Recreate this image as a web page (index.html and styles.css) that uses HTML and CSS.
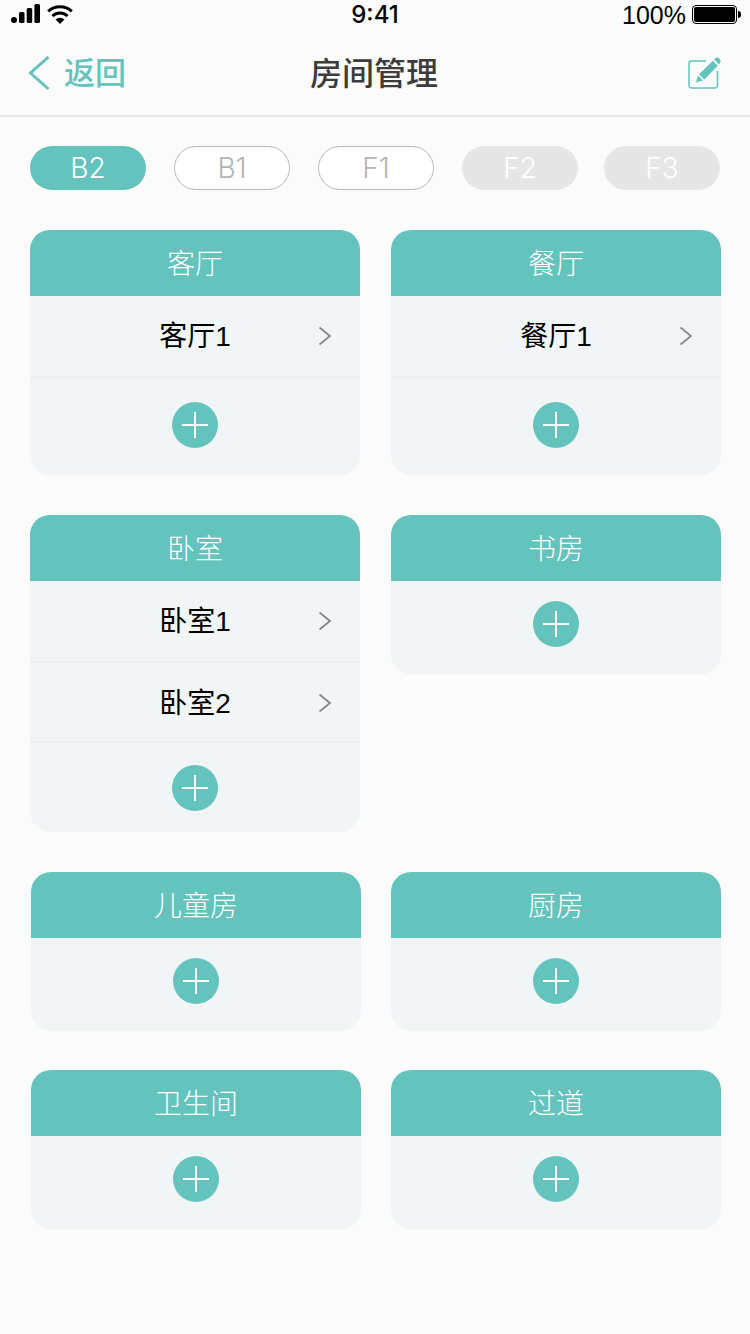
FILE: index.html
```html
<!DOCTYPE html>
<html lang="zh">
<head>
    <meta charset="UTF-8">
    <title>房间管理</title>
    <link rel="stylesheet" href="styles.css">
</head>
<body>
    <div class="status-bar">
        <div class="status-left">
            <svg class="signal" width="30" height="19" viewBox="0 0 30 19">
                <circle cx="3" cy="16" r="3" fill="#000"/>
                <rect x="8" y="8" width="5.500" height="11" rx="1.500" fill="#000"/>
                <rect x="15.700" y="4" width="5.500" height="15" rx="1.500" fill="#000"/>
                <rect x="23.400" y="0" width="5.600" height="19" rx="1.500" fill="#000"/>
            </svg>
            <svg class="wifi" width="26" height="19" viewBox="0 0 26 19">
                <path d="M13 19 L8.600 14.400 A6.400 6.400 0 0 1 17.400 14.400 Z" fill="#000"/>
                <path d="M5.400 11 A11 11 0 0 1 20.600 11" fill="none" stroke="#000" stroke-width="3"/>
                <path d="M1.200 6.400 A17.500 17.500 0 0 1 24.800 6.400" fill="none" stroke="#000" stroke-width="3"/>
            </svg>
        </div>
        <div class="status-time">9:41</div>
        <div class="status-right">
            <span class="battery-text">100%</span>
            <span class="battery"><span class="battery-fill"></span></span>
            <span class="battery-tip"></span>
        </div>
    </div>

    <header class="nav">
        <a class="back">
            <svg width="24" height="36" viewBox="0 0 24 36">
                <path d="M20.500 1 L2.500 17 L20.500 33" fill="none" stroke="#64c3bd" stroke-width="3"/>
            </svg>
            <span>返回</span>
        </a>
        <h1>房间管理</h1>
        <svg class="edit" width="34" height="34" viewBox="0 0 34 34">
            <path d="M18 4 H3.500 A2.500 2.500 0 0 0 1 6.500 V28.500 A2.500 2.500 0 0 0 3.500 31 H27 A2.500 2.500 0 0 0 29.500 28.500 V14" fill="none" stroke="#64c3bd" stroke-width="1.500"/>
            <path d="M10 18.600 L15 23.600 L8 25.500 Z" fill="#64c3bd"/>
            <path d="M11 17.400 L16.400 22.400 L29.800 8.800 L24.800 3.800 Z" fill="#64c3bd"/>
            <path d="M26 2.600 L27.500 1.200 A2.400 2.400 0 0 1 31 1.200 L32 2.400 A2.400 2.400 0 0 1 32 5.600 L31 7.600 Z" fill="#64c3bd"/>
        </svg>
    </header>

    <div class="floors">
        <div class="floor active">B2</div>
        <div class="floor outline">B1</div>
        <div class="floor outline">F1</div>
        <div class="floor off">F2</div>
        <div class="floor off last">F3</div>
    </div>

    <main class="rooms">
        <div class="room-row row-one">
            <section class="card">
                <div class="card-head">客厅</div>
                <div class="item item-first">客厅1<svg class="arrow" width="14" height="20" viewBox="0 0 14 20"><path d="M1.500 1.500 L12 10 L1.500 18.500" fill="none" stroke="#86868e" stroke-width="1.800"/></svg></div>
                <div class="add add-first"><span class="plus"></span></div>
            </section>
            <section class="card">
                <div class="card-head">餐厅</div>
                <div class="item item-first">餐厅1<svg class="arrow" width="14" height="20" viewBox="0 0 14 20"><path d="M1.500 1.500 L12 10 L1.500 18.500" fill="none" stroke="#86868e" stroke-width="1.800"/></svg></div>
                <div class="add add-first"><span class="plus"></span></div>
            </section>
        </div>

        <div class="room-row row-two">
            <section class="card">
                <div class="card-head">卧室</div>
                <div class="item item-first">卧室1<svg class="arrow" width="14" height="20" viewBox="0 0 14 20"><path d="M1.500 1.500 L12 10 L1.500 18.500" fill="none" stroke="#86868e" stroke-width="1.800"/></svg></div>
                <div class="item">卧室2<svg class="arrow" width="14" height="20" viewBox="0 0 14 20"><path d="M1.500 1.500 L12 10 L1.500 18.500" fill="none" stroke="#86868e" stroke-width="1.800"/></svg></div>
                <div class="add add-second"><span class="plus"></span></div>
            </section>
            <section class="card">
                <div class="card-head">书房</div>
                <div class="add"><span class="plus"></span></div>
            </section>
        </div>

        <div class="room-row row-three shifted">
            <section class="card">
                <div class="card-head">儿童房</div>
                <div class="add"><span class="plus"></span></div>
            </section>
            <section class="card">
                <div class="card-head">厨房</div>
                <div class="add"><span class="plus"></span></div>
            </section>
        </div>

        <div class="room-row shifted">
            <section class="card">
                <div class="card-head">卫生间</div>
                <div class="add"><span class="plus"></span></div>
            </section>
            <section class="card">
                <div class="card-head">过道</div>
                <div class="add"><span class="plus"></span></div>
            </section>
        </div>
    </main>
</body>
</html>
```

FILE: styles.css
```css
:root {
    --teal: #64c3bd;
    --card-bg: #f2f5f6;
    --page-bg: #fbfbfb;
    --line: #edeef0;
}

html, body {
    margin: 0;
    height: 1334px;
    overflow: hidden;
}

body {
    background-color: var(--page-bg);
    font-family: "Liberation Sans", "Noto Sans CJK SC", sans-serif;
    color: #000;
}

/* Status bar */
.status-bar {
    height: 32px;
    display: flex;
    justify-content: space-between;
    align-items: flex-start;
    position: relative;
}

.status-left {
    display: flex;
    align-items: flex-start;
    padding: 4px 0 0 11px;
}

.wifi {
    margin-left: 6px;
    margin-top: 1px;
}

.status-time {
    position: absolute;
    left: 0;
    right: 0;
    top: 0;
    text-align: center;
    font-family: Inter, "Liberation Sans", sans-serif;
    font-weight: 500;
    font-size: 24px;
    line-height: 30px;
}

.status-right {
    display: flex;
    align-items: center;
    height: 29px;
    padding-right: 9px;
}

.battery-text {
    font-size: 25px;
    line-height: 30px;
    margin-right: 6px;
}

.battery {
    width: 45px;
    height: 19px;
    box-sizing: border-box;
    border: 1px solid #000;
    border-radius: 4px;
    padding: 1px;
    display: block;
}

.battery-fill {
    display: block;
    width: 100%;
    height: 100%;
    background-color: #000;
    border-radius: 2px;
}

.battery-tip {
    width: 3px;
    height: 7px;
    margin-left: 1px;
    background-color: #000;
    border-radius: 0 3px 3px 0;
}

/* Nav */
.nav {
    height: 83px;
    border-bottom: 2px solid #e6e6e6;
    display: flex;
    align-items: center;
    justify-content: space-between;
    padding: 0 28px;
    position: relative;
}

.back {
    display: flex;
    align-items: center;
    gap: 12px;
    color: var(--teal);
    font-size: 31px;
    font-weight: 500;
}

.back span {
    line-height: 30px;
    margin-top: 1px;
}

.nav h1 {
    position: absolute;
    left: 0;
    right: 2px;
    top: 0;
    margin: 0;
    text-align: center;
    font-size: 32px;
    font-weight: 500;
    line-height: 84px;
    color: #3c3c3c;
}

/* Floor tabs */
.floors {
    display: flex;
    gap: 28px;
    padding: 29px 30px 0;
}

.floor {
    width: 116px;
    height: 44px;
    line-height: 45px;
    border-radius: 22px;
    text-align: center;
    font-family: Inter, "Liberation Sans", sans-serif;
    font-weight: 300;
    font-size: 28px;
    box-sizing: border-box;
}

.floor.last {
    margin-left: -2px;
}

.floor.active {
    background-color: var(--teal);
    color: #fff;
}

.floor.outline {
    border: 1px solid #b8b8b8;
    background-color: #fff;
    color: #b4b4b4;
    line-height: 43px;
}

.floor.off {
    background-color: #e6e6e6;
    color: #fff;
}

/* Room cards */
.rooms {
    padding: 40px 29px 0 30px;
    display: flex;
    flex-direction: column;
    gap: 40px;
}

.room-row {
    display: flex;
    align-items: flex-start;
    gap: 31px;
}

.row-three {
    margin-bottom: -1px;
}

.shifted {
    padding-left: 1px;
    gap: 30px;
}

.card {
    width: 330px;
    background-color: var(--card-bg);
    border-radius: 20px;
    overflow: hidden;
}

.card-head {
    height: 66px;
    line-height: 70px;
    background-color: var(--teal);
    color: #fff;
    text-align: center;
    font-size: 28px;
    font-weight: 300;
}

.item {
    height: 78px;
    line-height: 82px;
    border-bottom: 2px solid var(--line);
    text-align: center;
    font-size: 28px;
    position: relative;
}

.item-first {
    height: 80px;
}

.arrow {
    position: absolute;
    right: 28px;
    top: 30px;
}

.add {
    padding: 20px 0 27px;
    display: flex;
    justify-content: center;
}

.add-first {
    padding: 24px 0 27px;
}

.add-second {
    padding: 22px 0 21px;
}

.plus {
    display: block;
    width: 46px;
    height: 46px;
    border-radius: 50%;
    background-color: var(--teal);
    position: relative;
}

.plus::before,
.plus::after {
    content: "";
    position: absolute;
    background-color: #fff;
}

.plus::before {
    left: 10px;
    right: 10px;
    top: 22px;
    height: 2px;
}

.plus::after {
    top: 10px;
    bottom: 10px;
    left: 22px;
    width: 2px;
}
```
